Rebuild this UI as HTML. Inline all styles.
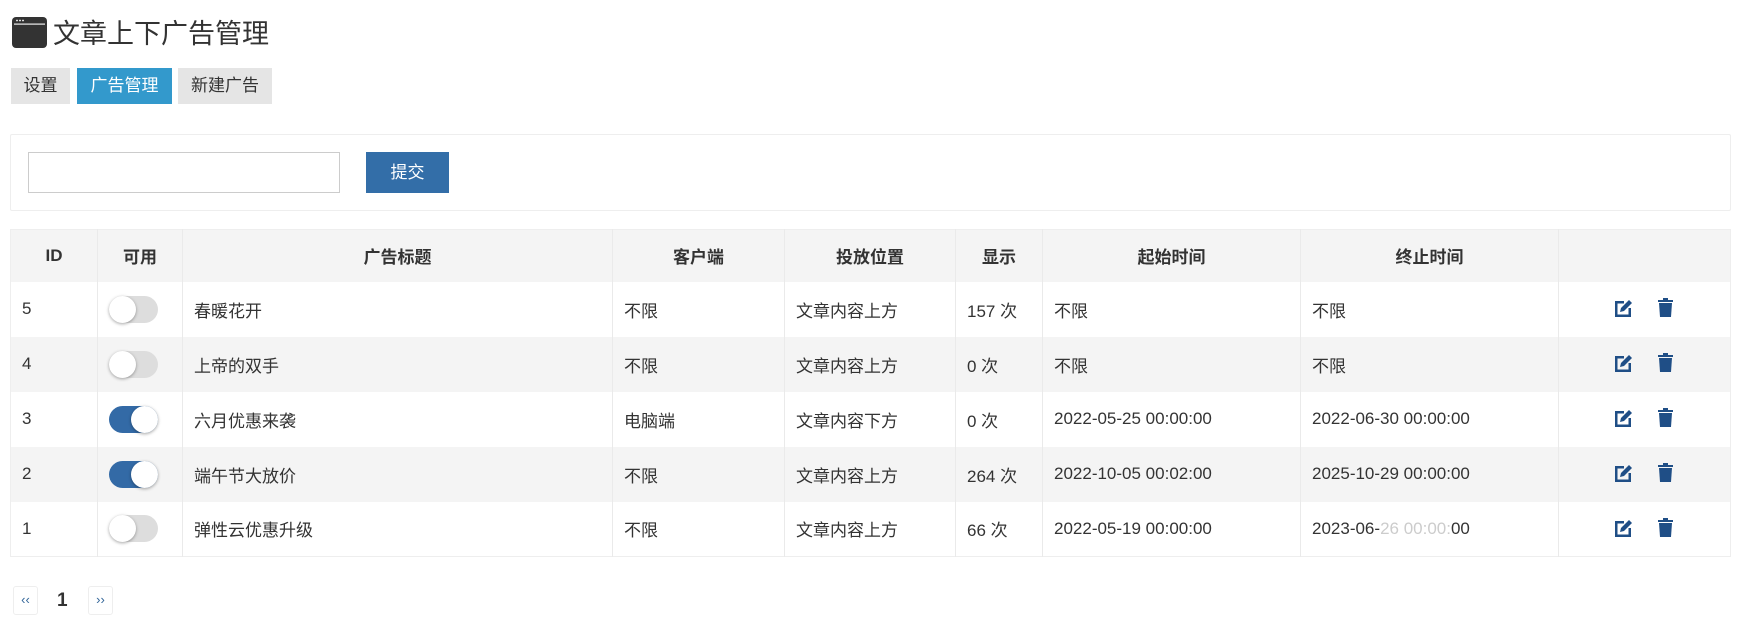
<!DOCTYPE html>
<html><head><meta charset="utf-8"><style>
*{box-sizing:border-box;margin:0;padding:0}
body{width:1743px;height:632px;background:#fff;font-family:"Liberation Sans","Noto Sans CJK SC",sans-serif;color:#333;position:relative;overflow:hidden}
.abs{position:absolute}
h1{position:absolute;left:53px;top:16px;font-size:27px;font-weight:normal;color:#333;line-height:36px}
.tab{position:absolute;top:68px;height:36px;line-height:36px;font-size:17px;text-align:center;background:#e5e5e5;color:#333}
.panel{position:absolute;left:10px;top:134px;width:1721px;height:77px;border:1px solid #eee;border-radius:2px}
table{position:absolute;left:10px;top:229px;width:1721px;border-collapse:collapse;font-size:17px;border:1px solid #eee}
th{height:52px;padding:0;background:#f4f4f4;font-weight:bold;text-align:center;border-right:1px solid #eaeaea}
td{height:55px;padding:0 11px;border-right:1px solid #eaeaea;vertical-align:middle}
tr:nth-child(odd) td{background:#f4f4f4}
th:last-child,td:last-child{border-right:none}
.tg{display:inline-block;width:49px;height:27px;border-radius:14px;background:#ddd;position:relative;vertical-align:middle}
.tg::after{content:"";position:absolute;left:0;top:0;width:27px;height:27px;border-radius:50%;background:#fff;box-shadow:0 1px 3px rgba(0,0,0,.35)}
.tg.on{background:#336aa6}
.tg.on::after{left:22px}
.pg{position:absolute;top:586px;width:25px;height:29px;border:1px solid #eee;border-radius:3px;font-size:13px;color:#336699;text-align:center;line-height:26px}
</style></head><body>
<svg class="abs" style="left:12px;top:17px" width="35" height="31" viewBox="0 0 35 31"><rect x="0" y="0" width="35" height="31" rx="4" fill="#333"/><rect x="2" y="6.5" width="31" height="1.2" fill="#eee"/><circle cx="5" cy="3.5" r="0.9" fill="#fff"/><circle cx="8" cy="3.5" r="0.9" fill="#fff"/><circle cx="11" cy="3.5" r="0.9" fill="#fff"/></svg>
<h1>文章上下广告管理</h1>
<div class="tab" style="left:11px;width:59px">设置</div>
<div class="tab" style="left:77px;width:95px;background:#3399cc;color:#fff">广告管理</div>
<div class="tab" style="left:178px;width:94px">新建广告</div>
<div class="panel"></div>
<div class="abs" style="left:28px;top:152px;width:312px;height:41px;border:1px solid #ccc"></div>
<div class="abs" style="left:366px;top:152px;width:83px;height:41px;background:#336ea8;color:#fff;font-size:17px;text-align:center;line-height:41px">提交</div>
<table>
<colgroup><col style="width:87px"><col style="width:85px"><col style="width:430px"><col style="width:172px"><col style="width:171px"><col style="width:87px"><col style="width:258px"><col style="width:258px"><col></colgroup>
<tr><th>ID</th><th>可用</th><th>广告标题</th><th>客户端</th><th>投放位置</th><th>显示</th><th>起始时间</th><th>终止时间</th><th></th></tr>
<tr><td>5</td><td><span class="tg"></span></td><td>春暖花开</td><td>不限</td><td>文章内容上方</td><td>157 次</td><td>不限</td><td>不限</td><td></td></tr>
<tr><td>4</td><td><span class="tg"></span></td><td>上帝的双手</td><td>不限</td><td>文章内容上方</td><td>0 次</td><td>不限</td><td>不限</td><td></td></tr>
<tr><td>3</td><td><span class="tg on"></span></td><td>六月优惠来袭</td><td>电脑端</td><td>文章内容下方</td><td>0 次</td><td>2022-05-25 00:00:00</td><td>2022-06-30 00:00:00</td><td></td></tr>
<tr><td>2</td><td><span class="tg on"></span></td><td>端午节大放价</td><td>不限</td><td>文章内容上方</td><td>264 次</td><td>2022-10-05 00:02:00</td><td>2025-10-29 00:00:00</td><td></td></tr>
<tr><td>1</td><td><span class="tg"></span></td><td>弹性云优惠升级</td><td>不限</td><td>文章内容上方</td><td>66 次</td><td>2022-05-19 00:00:00</td><td>2023-06-<span style="color:#ccc">26 00:00:</span>00</td><td></td></tr>
</table>
<div id="icons"></div>
<script>
var ys=[298,353,408,463,518],h='';
ys.forEach(function(y){
h+='<svg class="abs" style="left:1614px;top:'+y+'px" width="20" height="20" viewBox="0 0 20 20"><path d="M1 3h9v2.5H3.5v11h11V10H17v9H1z" fill="#1f4e86"/><path d="M6 14l1-4 8-8 3 3-8 8z" fill="#1f4e86"/></svg>';
h+='<svg class="abs" style="left:1658px;top:'+y+'px" width="15" height="20" viewBox="0 0 15 20"><path d="M0 2h5V0h5v2h5v2H0z" fill="#1f4e86"/><path d="M1 5h13l-1 14H2z" fill="#1f4e86"/></svg>';
});
document.getElementById('icons').innerHTML=h;
</script>
<div class="pg" style="left:13px">‹‹</div>
<div class="abs" style="left:57px;top:588px;font-size:19px;font-weight:bold;line-height:26px">1</div>
<div class="pg" style="left:88px">››</div>
</body></html>
